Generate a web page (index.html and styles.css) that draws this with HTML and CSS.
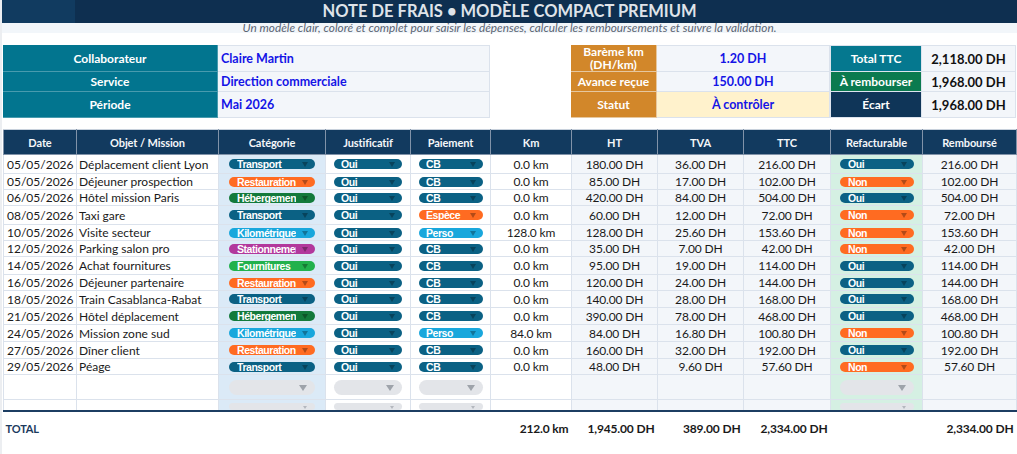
FILE: index.html
```html
<!DOCTYPE html>
<html lang="fr">
<head>
<meta charset="utf-8">
<title>Note de frais</title>
<link rel="stylesheet" href="styles.css">
</head>
<body>
<div class="sheet">
  <header class="title-bar">
    <h1 class="title">NOTE DE FRAIS • MODÈLE COMPACT PREMIUM</h1>
  </header>
  <p class="subtitle">Un modèle clair, coloré et complet pour saisir les dépenses, calculer les remboursements et suivre la validation.</p>

  <section class="info">
    <div class="lbl teal">Collaborateur</div>
    <div class="val left">Claire Martin</div>
    <div class="gap"></div>
    <div class="lbl orange two">Barème km<br>(DH/km)</div>
    <div class="val">1.20 DH</div>
    <div class="lbl teal2">Total TTC</div>
    <div class="val dark">2,118.00 DH</div>

    <div class="lbl teal">Service</div>
    <div class="val left">Direction commerciale</div>
    <div class="gap"></div>
    <div class="lbl orange">Avance reçue</div>
    <div class="val">150.00 DH</div>
    <div class="lbl green">À rembourser</div>
    <div class="val dark">1,968.00 DH</div>

    <div class="lbl teal">Période</div>
    <div class="val left">Mai 2026</div>
    <div class="gap"></div>
    <div class="lbl orange">Statut</div>
    <div class="val yellow">À contrôler</div>
    <div class="lbl navy">Écart</div>
    <div class="val dark">1,968.00 DH</div>
  </section>

  <table class="grid">
    <colgroup>
      <col class="c-date"><col class="c-obj"><col class="c-cat"><col class="c-just"><col class="c-pay"><col class="c-km">
      <col class="c-ht"><col class="c-tva"><col class="c-ttc"><col class="c-ref"><col class="c-rem">
    </colgroup>
    <thead>
      <tr><th>Date</th><th>Objet / Mission</th><th>Catégorie</th><th>Justificatif</th><th>Paiement</th><th>Km</th><th>HT</th><th>TVA</th><th>TTC</th><th>Refacturable</th><th>Remboursé</th></tr>
    </thead>
    <tbody>
      <tr class="r19"><td class="t-date">05/05/2026</td><td class="t-obj">Déplacement client Lyon</td><td><span class="pill p-cat blue"><span>Transport</span></span></td><td><span class="pill p-just blue"><span>Oui</span></span></td><td><span class="pill p-pay blue"><span>CB</span></span></td><td>0.0 km</td><td>180.00 DH</td><td>36.00 DH</td><td>216.00 DH</td><td><span class="pill p-ref blue"><span>Oui</span></span></td><td>216.00 DH</td></tr>
      <tr class="r16"><td class="t-date">05/05/2026</td><td class="t-obj">Déjeuner prospection</td><td><span class="pill p-cat orange"><span>Restauration</span></span></td><td><span class="pill p-just blue"><span>Oui</span></span></td><td><span class="pill p-pay blue"><span>CB</span></span></td><td>0.0 km</td><td>85.00 DH</td><td>17.00 DH</td><td>102.00 DH</td><td><span class="pill p-ref orange"><span>Non</span></span></td><td>102.00 DH</td></tr>
      <tr class="r16"><td class="t-date">06/05/2026</td><td class="t-obj">Hôtel mission Paris</td><td><span class="pill p-cat green"><span>Hébergement</span></span></td><td><span class="pill p-just blue"><span>Oui</span></span></td><td><span class="pill p-pay blue"><span>CB</span></span></td><td>0.0 km</td><td>420.00 DH</td><td>84.00 DH</td><td>504.00 DH</td><td><span class="pill p-ref blue"><span>Oui</span></span></td><td>504.00 DH</td></tr>
      <tr class="r19"><td class="t-date">08/05/2026</td><td class="t-obj">Taxi gare</td><td><span class="pill p-cat blue"><span>Transport</span></span></td><td><span class="pill p-just blue"><span>Oui</span></span></td><td><span class="pill p-pay orange"><span>Espèce</span></span></td><td>0.0 km</td><td>60.00 DH</td><td>12.00 DH</td><td>72.00 DH</td><td><span class="pill p-ref orange"><span>Non</span></span></td><td>72.00 DH</td></tr>
      <tr class="r16"><td class="t-date">10/05/2026</td><td class="t-obj">Visite secteur</td><td><span class="pill p-cat sky"><span>Kilométrique</span></span></td><td><span class="pill p-just blue"><span>Oui</span></span></td><td><span class="pill p-pay sky"><span>Perso</span></span></td><td>128.0 km</td><td>128.00 DH</td><td>25.60 DH</td><td>153.60 DH</td><td><span class="pill p-ref orange"><span>Non</span></span></td><td>153.60 DH</td></tr>
      <tr class="r14"><td class="t-date">12/05/2026</td><td class="t-obj">Parking salon pro</td><td><span class="pill p-cat purple"><span>Stationnement</span></span></td><td><span class="pill p-just blue"><span>Oui</span></span></td><td><span class="pill p-pay blue"><span>CB</span></span></td><td>0.0 km</td><td>35.00 DH</td><td>7.00 DH</td><td>42.00 DH</td><td><span class="pill p-ref orange"><span>Non</span></span></td><td>42.00 DH</td></tr>
      <tr class="r18"><td class="t-date">14/05/2026</td><td class="t-obj">Achat fournitures</td><td><span class="pill p-cat lime"><span>Fournitures</span></span></td><td><span class="pill p-just blue"><span>Oui</span></span></td><td><span class="pill p-pay blue"><span>CB</span></span></td><td>0.0 km</td><td>95.00 DH</td><td>19.00 DH</td><td>114.00 DH</td><td><span class="pill p-ref blue"><span>Oui</span></span></td><td>114.00 DH</td></tr>
      <tr class="r16"><td class="t-date">16/05/2026</td><td class="t-obj">Déjeuner partenaire</td><td><span class="pill p-cat orange"><span>Restauration</span></span></td><td><span class="pill p-just blue"><span>Oui</span></span></td><td><span class="pill p-pay blue"><span>CB</span></span></td><td>0.0 km</td><td>120.00 DH</td><td>24.00 DH</td><td>144.00 DH</td><td><span class="pill p-ref blue"><span>Oui</span></span></td><td>144.00 DH</td></tr>
      <tr class="r17"><td class="t-date">18/05/2026</td><td class="t-obj">Train Casablanca-Rabat</td><td><span class="pill p-cat blue"><span>Transport</span></span></td><td><span class="pill p-just blue"><span>Oui</span></span></td><td><span class="pill p-pay blue"><span>CB</span></span></td><td>0.0 km</td><td>140.00 DH</td><td>28.00 DH</td><td>168.00 DH</td><td><span class="pill p-ref blue"><span>Oui</span></span></td><td>168.00 DH</td></tr>
      <tr class="r17"><td class="t-date">21/05/2026</td><td class="t-obj">Hôtel déplacement</td><td><span class="pill p-cat green"><span>Hébergement</span></span></td><td><span class="pill p-just blue"><span>Oui</span></span></td><td><span class="pill p-pay blue"><span>CB</span></span></td><td>0.0 km</td><td>390.00 DH</td><td>78.00 DH</td><td>468.00 DH</td><td><span class="pill p-ref blue"><span>Oui</span></span></td><td>468.00 DH</td></tr>
      <tr class="r17"><td class="t-date">24/05/2026</td><td class="t-obj">Mission zone sud</td><td><span class="pill p-cat sky"><span>Kilométrique</span></span></td><td><span class="pill p-just blue"><span>Oui</span></span></td><td><span class="pill p-pay sky"><span>Perso</span></span></td><td>84.0 km</td><td>84.00 DH</td><td>16.80 DH</td><td>100.80 DH</td><td><span class="pill p-ref orange"><span>Non</span></span></td><td>100.80 DH</td></tr>
      <tr class="r17"><td class="t-date">27/05/2026</td><td class="t-obj">Dîner client</td><td><span class="pill p-cat orange"><span>Restauration</span></span></td><td><span class="pill p-just blue"><span>Oui</span></span></td><td><span class="pill p-pay blue"><span>CB</span></span></td><td>0.0 km</td><td>160.00 DH</td><td>32.00 DH</td><td>192.00 DH</td><td><span class="pill p-ref blue"><span>Oui</span></span></td><td>192.00 DH</td></tr>
      <tr class="r16"><td class="t-date">29/05/2026</td><td class="t-obj">Péage</td><td><span class="pill p-cat blue"><span>Transport</span></span></td><td><span class="pill p-just blue"><span>Oui</span></span></td><td><span class="pill p-pay blue"><span>CB</span></span></td><td>0.0 km</td><td>48.00 DH</td><td>9.60 DH</td><td>57.60 DH</td><td><span class="pill p-ref orange"><span>Non</span></span></td><td>57.60 DH</td></tr>
      <tr class="r-empty"><td></td><td></td><td><span class="blank p-cat"></span></td><td><span class="blank p-just"></span></td><td><span class="blank p-pay"></span></td><td></td><td></td><td></td><td></td><td><span class="blank p-ref"></span></td><td></td></tr>
      <tr class="r-cut"><td></td><td></td><td><span class="blank small p-cat"></span></td><td><span class="blank small p-just"></span></td><td><span class="blank small p-pay"></span></td><td></td><td></td><td></td><td></td><td><span class="blank small p-ref"></span></td><td></td></tr>
    </tbody>
    <tfoot>
      <tr><td class="t-total" colspan="2">TOTAL</td><td></td><td></td><td></td><td class="num">212.0 km</td><td class="num">1,945.00 DH</td><td class="num">389.00 DH</td><td class="num">2,334.00 DH</td><td></td><td class="num">2,334.00 DH</td></tr>
    </tfoot>
  </table>
</div>
</body>
</html>
```

FILE: styles.css
```css
* { box-sizing: border-box; }

html, body {
  margin: 0;
  padding: 0;
  background: #ffffff;
}

body {
  font-family: "Lato", "Liberation Sans", Arial, sans-serif;
  font-size: 12px;
  color: #1a1a1a;
  width: 1017px;
  height: 454px;
  overflow: hidden;
}

.sheet {
  padding-left: 1px;
  border-left: 2px solid #eceef1;
  height: 454px;
}

/* Title */
.title-bar {
  margin-left: -1px;
  height: 23px;
  background: linear-gradient(to right, #113b60 0, #113b60 73px, #0e2f50 73px);
  display: flex;
  align-items: center;
  justify-content: center;
}

.title {
  margin: 0;
  font-size: 16.5px;
  font-weight: 700;
  color: #dfe3e9;
  line-height: 23px;
  white-space: nowrap;
}

.subtitle {
  margin: 0 0 0 -1px;
  height: 10px;
  background: #f2f6fa;
  text-align: center;
  font-size: 11.8px;
  line-height: 10px;
  font-style: italic;
  color: #5a6472;
  white-space: nowrap;
}

/* Info block */
.info {
  margin-top: 12px;
  display: grid;
  grid-template-columns: 215px 272px 81px 86px 173px 92px 94px;
  grid-template-rows: 27px 20px 26px;
}

.lbl {
  display: flex;
  align-items: center;
  justify-content: center;
  text-align: center;
  color: #ffffff;
  font-weight: 700;
  font-size: 12px;
  line-height: 13px;
  border-bottom: 1px solid rgba(255, 255, 255, 0.28);
  border-right: 1px solid rgba(255, 255, 255, 0.28);
}

.lbl.teal { background: #02758f; }
.lbl.teal2 { background: #05788f; border: 1px solid #dde4ee; }
.lbl.green { background: #0b7a4f; border: 1px solid #dde4ee; border-top: 0; }
.lbl.navy { background: #0f3558; border: 1px solid #dde4ee; border-top: 0; }
.lbl.orange { background: #d2872a; border-right: 1px solid #e6c79f; border-bottom: 1px solid #e6c79f; }
.lbl.two { font-size: 12px; line-height: 13px; }

.val {
  display: flex;
  align-items: center;
  justify-content: center;
  background: #f3f6fa;
  border-right: 1px solid #dbe2ec;
  border-bottom: 1px solid #dbe2ec;
  color: #1414e6;
  font-weight: 700;
  font-size: 12.5px;
}

.val.left { justify-content: flex-start; padding-left: 3px; }
.val.yellow { background: #fff2cc; }
.val.dark { color: #111111; font-size: 13px; }

.info > :nth-child(-n+7) { border-top: 1px solid #dbe2ec; }
.info > .lbl.teal:nth-child(1) { border-top: 0; }
.info > .lbl.orange:nth-child(4) { border-top: 0; }

.gap { background: #ffffff; border: 0 !important; }

/* Table */
.grid {
  margin-top: 11px;
  width: 1013px;
  table-layout: fixed;
  border-collapse: collapse;
}

.c-date { width: 73px; background: #ffffff; }
.c-obj { width: 142px; background: #ffffff; }
.c-cat { width: 107px; background: #dbeaf7; }
.c-just { width: 85px; background: #ffffff; }
.c-pay { width: 80px; background: #ffffff; }
.c-km { width: 81px; background: #ffffff; }
.c-ht { width: 86px; background: #f3f6fa; }
.c-tva { width: 86px; background: #f3f6fa; }
.c-ttc { width: 87px; background: #f3f6fa; }
.c-ref { width: 92px; background: #d5f0e3; }
.c-rem { width: 94px; background: #f3f6fa; }

.grid th {
  height: 25px;
  background: #123a5f;
  color: #f4f6f9;
  font-weight: 700;
  font-size: 11px;
  letter-spacing: -0.1px;
  border: 1px solid #8193a9;
  border-top-color: #c8d1dc;
  padding: 0;
  text-align: center;
}

.grid td {
  border: 1px solid #dbe2ec;
  padding: 0;
  text-align: center;
  vertical-align: middle;
  font-size: 12px;
  letter-spacing: -0.15px;
  white-space: nowrap;
  overflow: hidden;
}

.grid td.t-date { text-align: left; padding-left: 3px; letter-spacing: 0; }
.grid td.t-obj { text-align: left; padding-left: 2px; letter-spacing: 0; }

.r14 td { height: 14px; }
.r16 td { height: 16px; }
.r17 td { height: 17px; }
.r18 td { height: 18px; }
.r19 td { height: 19px; }
.r-empty td { height: 25px; }
.r-cut td { height: 11px; vertical-align: top; }

/* Pills */
.pill {
  position: relative;
  display: block;
  height: 10px;
  border-radius: 5px;
  color: #ffffff;
  font-family: "Liberation Sans", Arial, sans-serif;
  font-weight: 700;
  font-size: 10.5px;
  line-height: 10px;
  letter-spacing: -0.45px;
  padding-left: 7px;
  text-align: left;
}

.pill > span {
  display: block;
  overflow: hidden;
  white-space: nowrap;
}

.pill::after {
  content: "";
  position: absolute;
  right: 7px;
  top: 3px;
  border-left: 3px solid transparent;
  border-right: 3px solid transparent;
  border-top: 5px solid rgba(0, 0, 0, 0.3);
}

.p-cat { margin: 0 10px 0 10px; padding-right: 19px; padding-left: 8px; }
.p-just { margin: 0 8px 0 8px; padding-right: 16px; }
.p-pay { margin: 0 7px 0 8px; padding-right: 16px; }
.p-ref { margin: 0 8px 0 9px; padding-right: 16px; padding-left: 8px; }

.pill.blue { background: #0b6184; }
.pill.orange { background: #ff6b21; }
.pill.green { background: #137a3b; }
.pill.sky { background: #19a7dc; }
.pill.purple { background: #b2389c; }
.pill.lime { background: #22b14c; }

.blank {
  position: relative;
  display: block;
  height: 15px;
  border-radius: 8px;
  background: #e3e5e9;
}

.blank::after {
  content: "";
  position: absolute;
  right: 8px;
  top: 5px;
  border-left: 4px solid transparent;
  border-right: 4px solid transparent;
  border-top: 6px solid #9ea3aa;
}

.blank.small {
  height: 7px;
  margin-top: 3px;
  border-radius: 4px;
}

.blank.small::after {
  right: 8px;
  top: 3px;
  border-left: 2px solid transparent;
  border-right: 2px solid transparent;
  border-top: 3px solid #b4b8be;
}

/* Footer */
.grid tfoot td {
  background: #ffffff;
  border: 0;
  border-top: 2px solid #1c3d62;
  height: 33px;
  font-weight: 700;
  font-size: 12px;
  color: #1a1a1a;
}

.grid tfoot td.num { text-align: right; padding-right: 3px; }

.grid tfoot td.t-total {
  text-align: left;
  padding-left: 2px;
  color: #1c3a5e;
  font-size: 11px;
}
```
